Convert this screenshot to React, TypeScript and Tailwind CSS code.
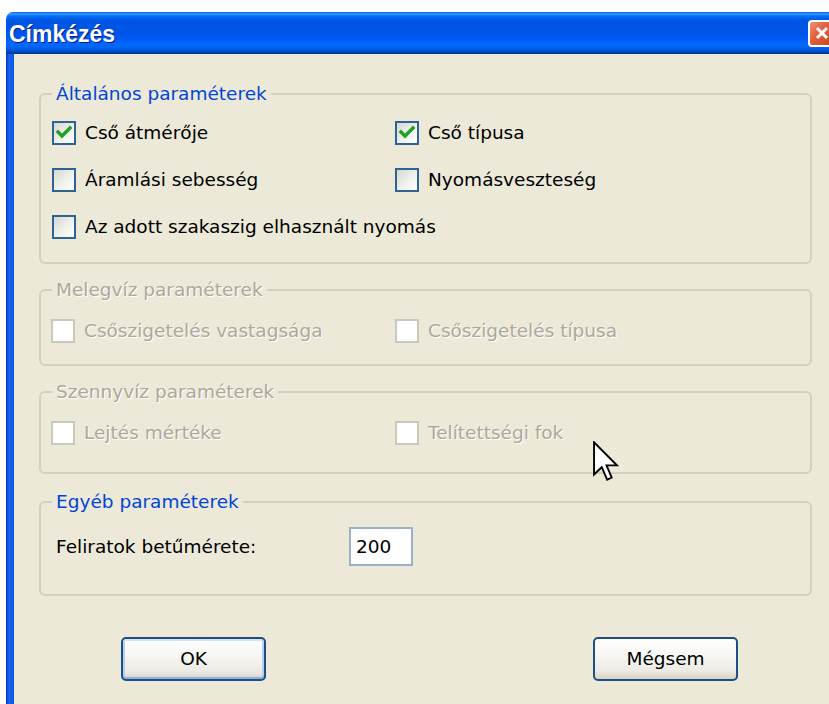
import type { ReactNode } from "react"

const ui = "font-['DejaVu_Sans',sans-serif] text-[18.5px]"

function Box({ checked, disabled }: { checked?: boolean; disabled?: boolean }) {
  if (disabled) {
    return <span className="w-[24px] h-[24px] shrink-0 border-2 border-[#CAC8BB] bg-white" />
  }
  return (
    <span className="w-[24px] h-[24px] shrink-0 border-2 border-[#2F6396] bg-[linear-gradient(135deg,#D8D8D2_0%,#F0F0EC_55%,#FFFFFF_100%)] flex items-center justify-center">
      {checked && (
        <svg width="20" height="20" viewBox="0 0 20 20">
          <polyline points="4,9 8,13 16,5" fill="none" stroke="#21A121" strokeWidth="3.4" strokeLinecap="square" />
        </svg>
      )}
    </span>
  )
}

function Option({ label, checked, disabled }: { label: string; checked?: boolean; disabled?: boolean }) {
  return (
    <label className="flex items-center gap-[9px] h-[26px] whitespace-nowrap">
      <Box checked={checked} disabled={disabled} />
      <span className={disabled ? "text-[#ACA899] [text-shadow:1px_1px_0_#ffffff]" : "text-black"}>{label}</span>
    </label>
  )
}

function Group({ title, disabled, className, children }: { title: string; disabled?: boolean; className: string; children: ReactNode }) {
  return (
    <fieldset className={`rounded-[6px] border-2 border-[#D3D0C0] ${className}`}>
      <legend
        className={`ml-[11px] px-[4px] leading-[22px] ${
          disabled ? "text-[#ACA899] [text-shadow:1px_1px_0_#ffffff]" : "text-[#0046D5]"
        }`}
      >
        {title}
      </legend>
      {children}
    </fieldset>
  )
}

function XpButton({ label, isDefault }: { label: string; isDefault?: boolean }) {
  return (
    <button
      className={`h-[44px] w-[145px] rounded-[5px] border-2 border-[#1F4F82] bg-[linear-gradient(to_bottom,#FFFFFF_0%,#F5F5F1_45%,#ECEAE2_80%,#D8D3C8_100%)] text-black ${
        isDefault ? "shadow-[inset_0_2px_0_#CFE3FC,inset_0_-2px_0_#8CB0E6,inset_2px_0_0_#B6D0F5,inset_-2px_0_0_#B6D0F5]" : ""
      }`}
    >
      {label}
    </button>
  )
}

export default function App() {
  return (
    <div className={`relative w-[829px] h-[704px] overflow-hidden bg-white pt-[12px] pl-[6px] ${ui}`}>
      <div className="flex flex-col h-full">
        {/* title bar */}
        <div className="h-[42px] shrink-0 rounded-tl-[7px] flex items-center pl-[3px] bg-[linear-gradient(to_bottom,#0058EE_0%,#3593FF_4%,#288EFF_6%,#127DFF_8%,#036FFC_10%,#0262EE_14%,#0057E5_20%,#0054E3_24%,#0055EB_56%,#005BF5_66%,#026AFE_76%,#0062EF_86%,#0052D6_92%,#0040AB_96%,#003092_100%)]">
          <span className="pt-[3px] font-['Liberation_Sans',sans-serif] font-bold text-[23px] text-white [text-shadow:1px_1px_0_#0A1A7A]">
            Címkézés
          </span>
          <div className="ml-auto -mr-[7px] w-[28px] h-[27px] rounded-[4px] border-2 border-white bg-[linear-gradient(135deg,#EE9377_0%,#E2613C_40%,#C4411C_100%)] flex items-center justify-center">
            <svg width="14" height="14" viewBox="0 0 14 14">
              <path d="M2 2 L12 12 M12 2 L2 12" stroke="#ffffff" strokeWidth="3" />
            </svg>
          </div>
        </div>

        <div className="flex flex-1">
          <div className="w-[8px] shrink-0 bg-[linear-gradient(to_right,#0B2FC8_0%,#1764EC_35%,#0A58E4_100%)]" />

          {/* dialog body */}
          <div className="flex-1 bg-[#ECE9D8] pl-[25px] pr-[17px] flex flex-col">
            <Group title="Általános paraméterek" className="mt-[29px]">
              <div className="pl-[11px] pt-[15px] pb-[22px] flex flex-col gap-[21px]">
                <div className="grid grid-cols-[343px_1fr]">
                  <Option label="Cső átmérője" checked />
                  <Option label="Cső típusa" checked />
                </div>
                <div className="grid grid-cols-[343px_1fr]">
                  <Option label="Áramlási sebesség" />
                  <Option label="Nyomásveszteség" />
                </div>
                <Option label="Az adott szakaszig elhasznált nyomás" />
              </div>
            </Group>

            <Group title="Melegvíz paraméterek" disabled className="mt-[15px]">
              <div className="pl-[10px] pt-[17px] pb-[20px] grid grid-cols-[344px_1fr]">
                <Option label="Csőszigetelés vastagsága" disabled />
                <Option label="Csőszigetelés típusa" disabled />
              </div>
            </Group>

            <Group title="Szennyvíz paraméterek" disabled className="mt-[15px]">
              <div className="pl-[10px] pt-[17px] pb-[26px] grid grid-cols-[344px_1fr]">
                <Option label="Lejtés mértéke" disabled />
                <Option label="Telítettségi fok" disabled />
              </div>
            </Group>

            <Group title="Egyéb paraméterek" className="mt-[17px]">
              <div className="pl-[15px] pt-[14px] pb-[28px] flex items-center">
                <span className="w-[293px] text-black">Feliratok betűmérete:</span>
                <div className="w-[64px] h-[39px] border-2 border-[#9BB0C9] bg-white flex items-center pl-[5px] text-black">200</div>
              </div>
            </Group>

            <div className="mt-[41px] pl-[82px] flex gap-[327px]">
              <XpButton label="OK" isDefault />
              <XpButton label="Mégsem" />
            </div>
          </div>
        </div>
      </div>

      {/* mouse pointer */}
      <svg className="absolute left-[593px] top-[441px]" width="26" height="42" viewBox="0 0 12.5 20">
        <path d="M0.5 0.5 L0.5 16 L4.2 12.5 L6.8 18.5 L9 17.5 L6.5 11.6 L11.5 11.6 Z" fill="#ffffff" stroke="#000000" strokeWidth="0.9" strokeLinejoin="miter" />
      </svg>
    </div>
  )
}
